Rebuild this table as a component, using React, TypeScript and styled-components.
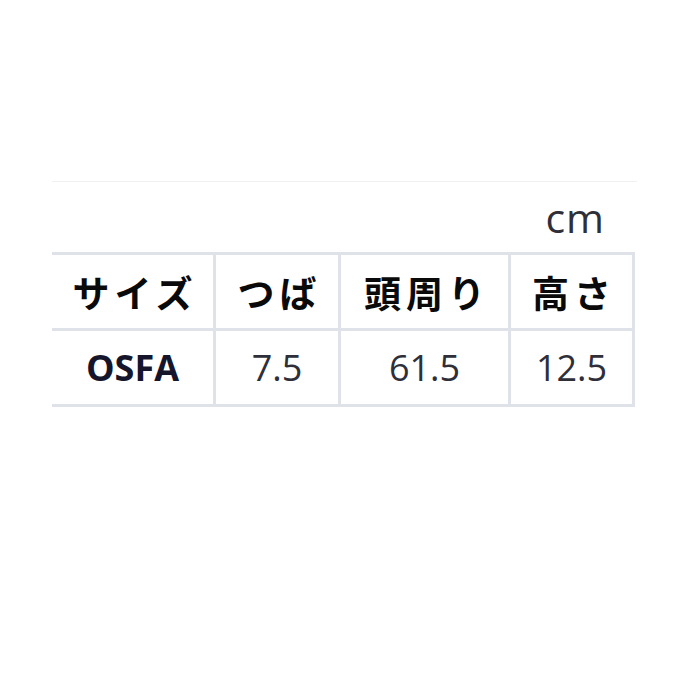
import styled, { createGlobalStyle } from "styled-components";

const GlobalStyle = createGlobalStyle`
  body {
    margin: 0;
    background: #ffffff;
    font-family: "Open Sans", "Noto Sans CJK JP", sans-serif;
  }
`;

const Page = styled.div`
  padding: 181px 0 0 52px;
`;

const SizeChart = styled.section`
  width: 585px;
  border-top: 1px solid #f1f1f1;
`;

const Unit = styled.div`
  height: 70px;
  line-height: 70px;
  padding-right: 32px;
  text-align: right;
  font-size: 41px;
  letter-spacing: 1px;
  color: #2f2f3a;
`;

const Grid = styled.div`
  display: grid;
  grid-template-columns: 161px 122px 167px 121px;
  grid-auto-rows: 73px;
  gap: 3px;
  padding: 3px 3px 3px 0;
  width: 583px;
  box-sizing: border-box;
  background: #dfe2e8;
`;

const Cell = styled.div<{ $head?: boolean; $bold?: boolean }>`
  display: flex;
  align-items: center;
  justify-content: center;
  background: #ffffff;
  font-family: ${(p) =>
    p.$head ? `"Noto Sans CJK JP", sans-serif` : `"Open Sans", sans-serif`};
  font-size: ${(p) => (p.$head ? "37px" : "36px")};
  font-weight: ${(p) => (p.$head || p.$bold ? 700 : 400)};
  letter-spacing: ${(p) => (p.$head ? "5px" : "0")};
  padding-left: ${(p) => (p.$head ? "5px" : "0")};
  color: ${(p) => (p.$head ? "#0a0a0a" : p.$bold ? "#15152b" : "#2f2f3a")};
`;

const headers = ["サイズ", "つば", "頭周り", "高さ"];
const rows = [["OSFA", "7.5", "61.5", "12.5"]];

export default function App() {
  return (
    <>
      <GlobalStyle />
      <Page>
        <SizeChart>
          <Unit>cm</Unit>
          <Grid>
            {headers.map((h) => (
              <Cell key={h} $head>
                {h}
              </Cell>
            ))}
            {rows.map((r) =>
              r.map((v, i) => (
                <Cell key={v} $bold={i === 0}>
                  {v}
                </Cell>
              ))
            )}
          </Grid>
        </SizeChart>
      </Page>
    </>
  );
}
